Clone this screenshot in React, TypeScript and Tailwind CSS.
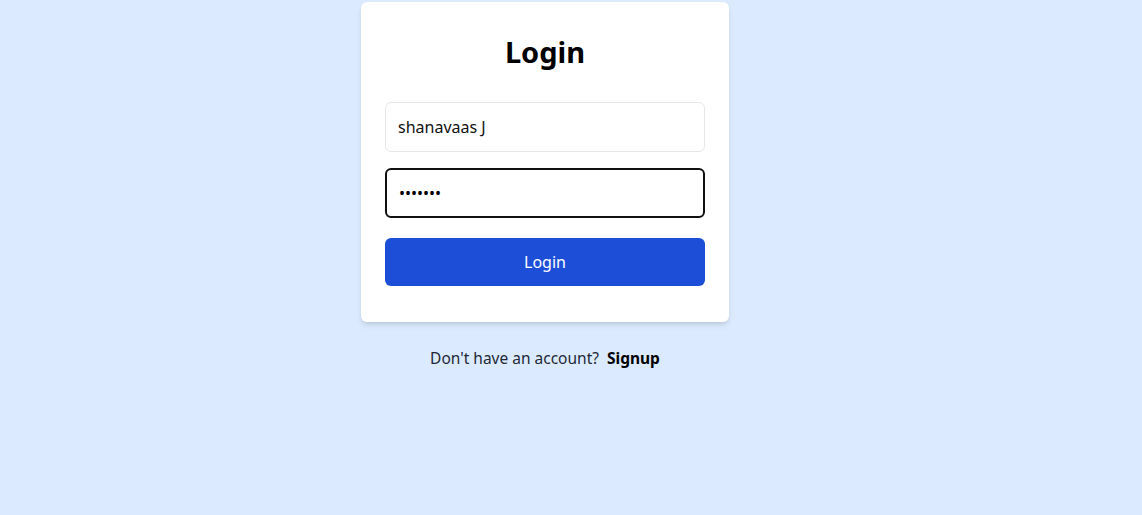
import { useState } from "react";

export default function App() {
  const [name, setName] = useState("shanavaas J");
  const [password, setPassword] = useState("1234567");

  return (
    <div
      className="min-h-[515px] w-full bg-[#dbeafe] flex flex-col items-center pt-[2px] pr-[52px]"
      style={{ fontFamily: '"Noto Sans", "Open Sans", sans-serif' }}
    >
      <form
        className="w-[368px] bg-white rounded-md shadow-md px-6 pt-8 pb-9"
        onSubmit={(e) => e.preventDefault()}
      >
        <h1 className="text-[29px] leading-9 font-bold text-center text-black mb-8">Login</h1>
        <input
          type="text"
          value={name}
          onChange={(e) => setName(e.target.value)}
          className="block w-full h-[50px] px-3 text-base text-[#111] border border-[#e5e7eb] rounded-md outline-none"
        />
        <input
          type="password"
          autoFocus
          value={password}
          onChange={(e) => setPassword(e.target.value)}
          className="block w-full h-[50px] mt-4 px-3 text-base text-black border-2 border-[#111] rounded-md outline-none"
        />
        <button
          type="submit"
          className="block w-full h-12 mt-5 bg-[#1d4ed8] text-white text-base rounded-md"
        >
          Login
        </button>
      </form>
      <p className="mt-6 text-[15.5px] leading-6 text-[#1f2937]">
        Don't have an account?
        <a href="#" className="ml-2 font-bold text-black">Signup</a>
      </p>
    </div>
  );
}
